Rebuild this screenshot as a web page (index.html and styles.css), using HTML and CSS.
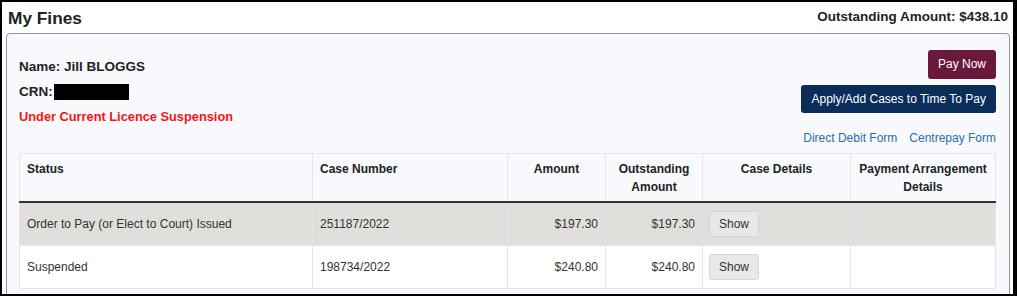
FILE: index.html
```html
<!DOCTYPE html>
<html lang="en">
<head>
  <meta charset="UTF-8">
  <title>My Fines</title>
  <meta name="viewport" content="width=device-width, initial-scale=1.0">
  <link rel="stylesheet" href="styles.css">
</head>
<body>
<div class="frame">
  <header class="top-bar">
    <h1>My Fines</h1>
    <div class="total">Outstanding Amount: $438.10</div>
  </header>

  <div class="panel">
    <div class="panel-top">
      <div class="person">
        <div class="line">Name: Jill BLOGGS</div>
        <div class="line">CRN:<span class="redacted"></span></div>
        <div class="line alert">Under Current Licence Suspension</div>
      </div>
      <div class="actions">
        <a href="#" class="btn btn-pay">Pay Now</a>
        <a href="#" class="btn btn-ttp">Apply/Add Cases to Time To Pay</a>
        <div class="forms">
          <a href="#">Direct Debit Form</a>
          <a href="#">Centrepay Form</a>
        </div>
      </div>
    </div>

    <table class="fines">
      <colgroup>
        <col style="width:293px">
        <col style="width:195px">
        <col style="width:98px">
        <col style="width:97px">
        <col style="width:148px">
        <col>
      </colgroup>
      <thead>
        <tr>
          <th>Status</th>
          <th>Case Number</th>
          <th class="c">Amount</th>
          <th class="c">Outstanding Amount</th>
          <th class="c">Case Details</th>
          <th class="c">Payment Arrangement Details</th>
        </tr>
      </thead>
      <tbody>
        <tr class="shaded">
          <td>Order to Pay (or Elect to Court) Issued</td>
          <td>251187/2022</td>
          <td class="r">$197.30</td>
          <td class="r">$197.30</td>
          <td><button class="show">Show</button></td>
          <td></td>
        </tr>
        <tr>
          <td>Suspended</td>
          <td>198734/2022</td>
          <td class="r">$240.80</td>
          <td class="r">$240.80</td>
          <td><button class="show">Show</button></td>
          <td></td>
        </tr>
      </tbody>
    </table>
  </div>
</div>
</body>
</html>
```

FILE: styles.css
```css
html, body {
  margin: 0;
  padding: 0;
  background: #000;
  font-family: 'Liberation Sans', Arial, sans-serif;
  color: #333;
  overflow: hidden;
}
.frame {
  box-sizing: border-box;
  width: 1017px;
  height: 296px;
  border: 2px solid #000;
  border-right-width: 4px;
  background: #fff;
  overflow: hidden;
}
.top-bar {
  display: flex;
  align-items: center;
  justify-content: space-between;
  height: 31px;
  padding: 0 5px 0 6px;
}
.top-bar h1 {
  margin: 0;
  font-size: 17.3px;
  font-weight: bold;
  color: #222;
  position: relative;
  top: 1px;
}
.total {
  font-size: 13.5px;
  font-weight: bold;
  color: #222;
  position: relative;
  top: -1px;
}
.panel {
  margin: 0 3px 0 4px;
  border: 1px solid #8597ae;
  border-radius: 4px;
  background: #f7f9fc;
  padding: 16px 12px 0 12px;
  height: 300px;
}
.panel-top {
  display: flex;
  justify-content: space-between;
  align-items: flex-start;
}
.person {
  margin-top: 4px;
}
.person .line {
  height: 25px;
  line-height: 25px;
  font-size: 13.5px;
  font-weight: bold;
  color: #222;
  display: flex;
  align-items: center;
}
.person .alert {
  color: #f71414;
  font-size: 12.8px;
}
.redacted {
  display: inline-block;
  width: 75px;
  height: 16px;
  background: #000;
  margin-left: 1px;
}
.actions {
  display: flex;
  flex-direction: column;
  align-items: flex-end;
  margin-right: 1px;
}
.btn {
  display: block;
  color: #fff;
  text-decoration: none;
  font-size: 12px;
  border-radius: 3px;
  padding: 0 10px;
}
.btn-pay {
  background: #6a183b;
  height: 29px;
  line-height: 29px;
}
.btn-ttp {
  background: #0a2d5a;
  height: 28px;
  line-height: 28px;
  margin-top: 6px;
}
.forms {
  margin-top: 17px;
  display: flex;
  gap: 12px;
  line-height: 17px;
}
.forms a {
  color: #2d6db3;
  font-size: 12px;
  text-decoration: none;
}
.fines {
  margin-top: 6px;
  width: 977px;
  table-layout: fixed;
  border-collapse: collapse;
  font-size: 12px;
  border: 1px solid #e3e5ea;
}
.fines th {
  text-align: left;
  vertical-align: top;
  font-weight: bold;
  color: #222;
  line-height: 18px;
  padding: 6px 7px 5px 7px;
  border-left: 1px solid #e3e5ea;
  border-bottom: 2px solid #333;
}
.fines th.c {
  text-align: center;
}
.fines td {
  padding: 8px 7px;
  height: 26px;
  border-left: 1px solid #e3e5ea;
  border-bottom: 1px solid #e3e5ea;
  color: #333;
  background: #fff;
}
.fines tr.shaded td {
  background: #e1dfdb;
}
.fines td.r {
  text-align: right;
}
.show {
  font-family: 'Liberation Sans', Arial, sans-serif;
  font-size: 12px;
  color: #333;
  background: #e8e8e8;
  border: 1px solid #d6d6d6;
  border-radius: 3px;
  height: 26px;
  padding: 0 9px;
  margin-left: -1px;
}
```
